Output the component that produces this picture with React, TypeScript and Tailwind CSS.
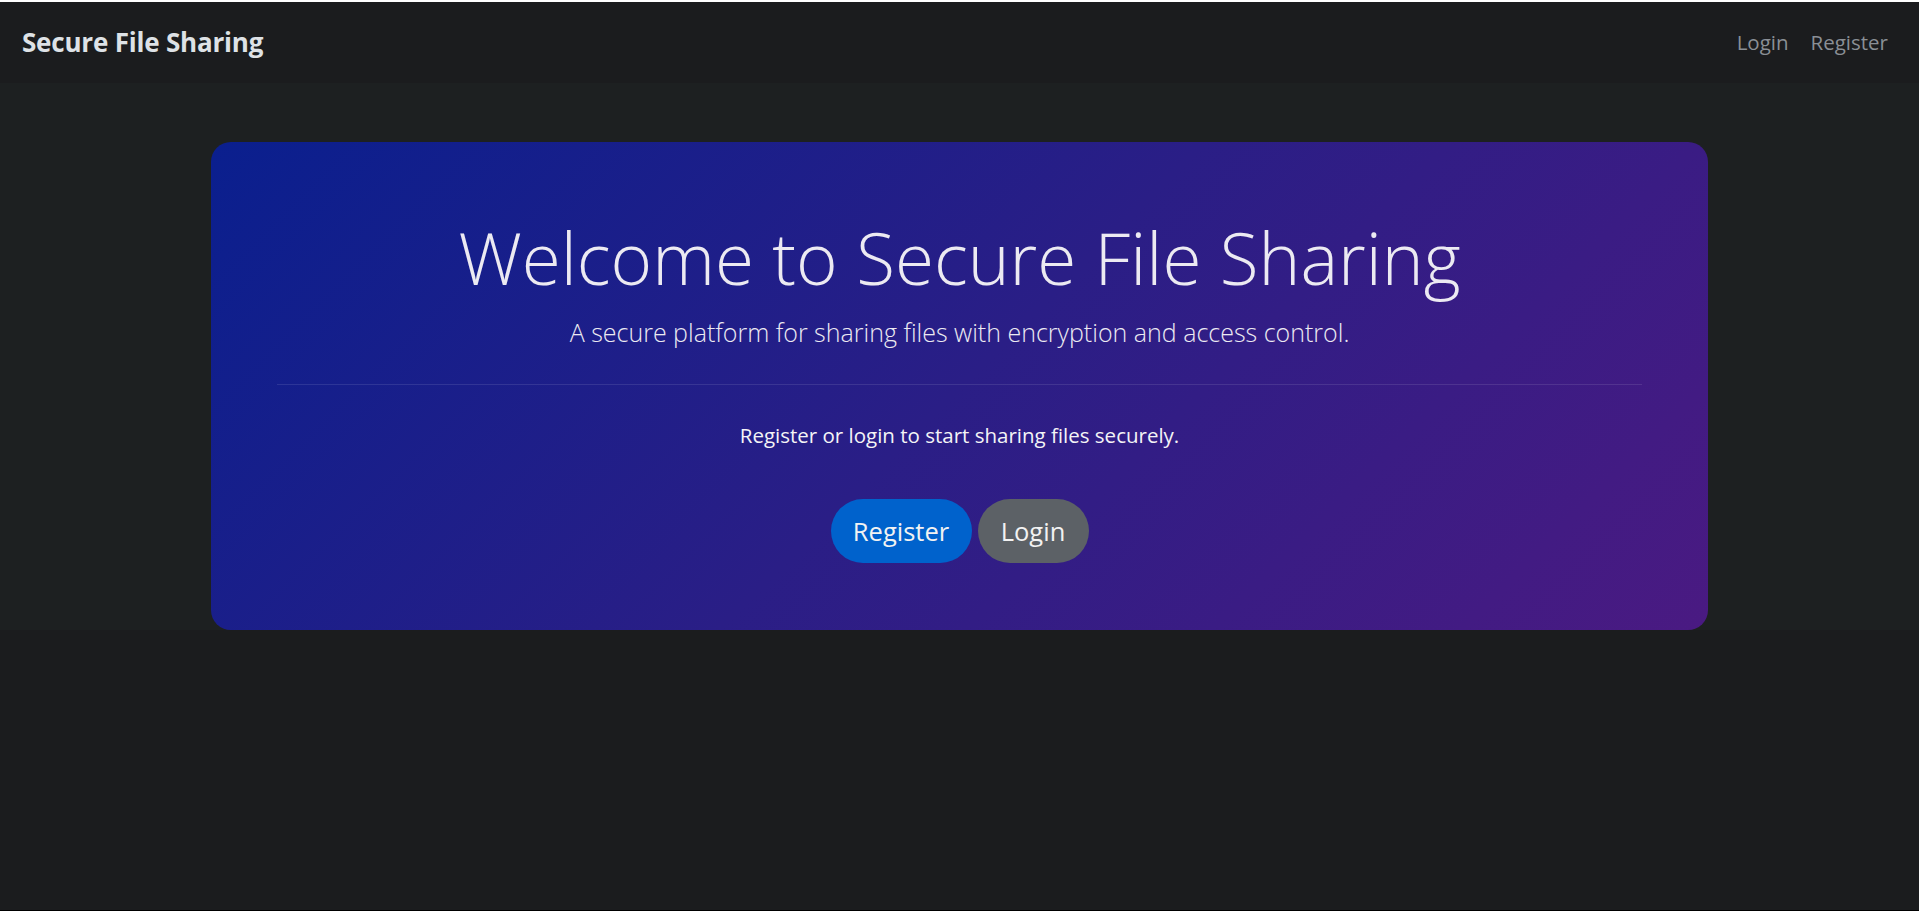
import React from "react";

export default function App() {
  return (
    <div className="min-h-[911px] h-[911px] flex flex-col bg-[#1b1c1e] border-t-2 border-t-white border-b border-b-black overflow-hidden" style={{ fontFamily: '"Open Sans", "Noto Sans", sans-serif' }}>
      <nav className="h-[81px] shrink-0 flex items-center justify-between pl-[22px] pr-[31px] bg-[#1b1c1e]">
        <a className="text-[26px] font-bold text-[#dee2e6] tracking-[-0.2px]">Secure File Sharing</a>
        <div className="flex items-center gap-[22px] text-[20.5px] text-[#8a8f95]">
          <a>Login</a>
          <a>Register</a>
        </div>
      </nav>
      <section className="bg-[#1d2021] flex justify-center pt-[59px]">
        <div className="w-[1497px] rounded-[20px] bg-[linear-gradient(135deg,#0a1f8e_0%,#2a1e86_50%,#4a1a82_100%)] px-[66px] pt-[70px] pb-[67px] text-center">
          <h1 className="text-[71px] leading-[91px] font-light text-[#eceaf2]">Welcome to Secure File Sharing</h1>
          <p className="mt-[10px] text-[25px] leading-[38px] font-light text-[#eceaf2]">A secure platform for sharing files with encryption and access control.</p>
          <hr className="mt-[33px] border-0 h-px bg-[#ffffff]/10" />
          <p className="mt-[35px] text-[20.5px] leading-[30px] text-[#f4f4f6]">Register or login to start sharing files securely.</p>
          <div className="mt-[49px] flex justify-center gap-[6px]">
            <button className="w-[141px] h-[64px] rounded-full bg-[#0062cc] text-[#f2f2f2] text-[25.5px]">Register</button>
            <button className="w-[111px] h-[64px] rounded-full bg-[#5c6166] text-[#f2f2f2] text-[25.5px]">Login</button>
          </div>
        </div>
      </section>
      <div className="flex-1 bg-[#1b1c1e]" />
    </div>
  );
}
